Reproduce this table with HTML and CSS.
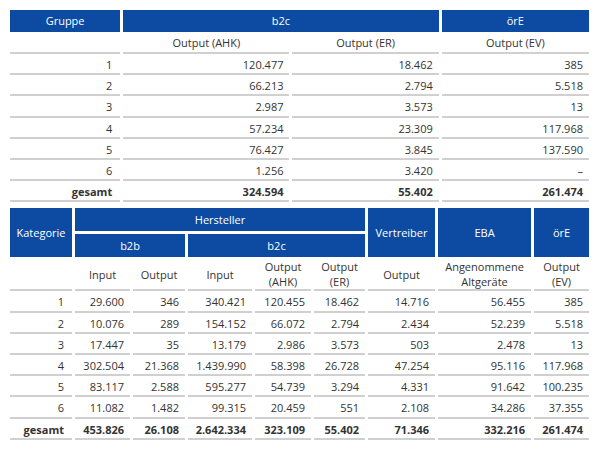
FILE: index.html
```html
<!DOCTYPE html>
<html lang="de">
<head>
<meta charset="utf-8">
<title>Tabellen</title>
<link rel="stylesheet" href="styles.css">
</head>
<body>
<div class="page">
<table class="grid t1">
  <colgroup>
    <col class="c-110"><col class="c-166"><col class="c-146"><col class="c-147">
  </colgroup>
  <thead>
    <tr class="hrow">
      <th class="head">Gruppe</th>
      <th class="head" colspan="2">b2c</th>
      <th class="head">örE</th>
    </tr>
    <tr class="srow">
      <th class="sub"></th>
      <th class="sub">Output (AHK)</th>
      <th class="sub">Output (ER)</th>
      <th class="sub">Output (EV)</th>
    </tr>
  </thead>
  <tbody>
    <tr><td>1</td><td>120.477</td><td>18.462</td><td>385</td></tr>
    <tr><td>2</td><td>66.213</td><td>2.794</td><td>5.518</td></tr>
    <tr><td>3</td><td>2.987</td><td>3.573</td><td>13</td></tr>
    <tr><td>4</td><td>57.234</td><td>23.309</td><td>117.968</td></tr>
    <tr><td>5</td><td>76.427</td><td>3.845</td><td>137.590</td></tr>
    <tr><td>6</td><td>1.256</td><td>3.420</td><td>–</td></tr>
    <tr class="total"><td>gesamt</td><td>324.594</td><td>55.402</td><td>261.474</td></tr>
  </tbody>
</table>
<table class="grid t2">
  <colgroup>
    <col class="c-62"><col class="c-55"><col class="c-52"><col class="c-64"><col class="c-56"><col class="c-51"><col class="c-67"><col class="c-93"><col class="c-55">
  </colgroup>
  <thead>
    <tr class="hrow2">
      <th class="head" rowspan="2">Kategorie</th>
      <th class="head" colspan="5">Hersteller</th>
      <th class="head" rowspan="2">Vertreiber</th>
      <th class="head" rowspan="2">EBA</th>
      <th class="head" rowspan="2">örE</th>
    </tr>
    <tr class="hrow2">
      <th class="head" colspan="2">b2b</th>
      <th class="head" colspan="3">b2c</th>
    </tr>
    <tr class="srow2">
      <th class="sub"></th>
      <th class="sub">Input</th>
      <th class="sub">Output</th>
      <th class="sub">Input</th>
      <th class="sub">Output<br>(AHK)</th>
      <th class="sub">Output<br>(ER)</th>
      <th class="sub">Output</th>
      <th class="sub">Angenommene<br>Altgeräte</th>
      <th class="sub">Output<br>(EV)</th>
    </tr>
  </thead>
  <tbody>
    <tr><td>1</td><td>29.600</td><td>346</td><td>340.421</td><td>120.455</td><td>18.462</td><td>14.716</td><td>56.455</td><td>385</td></tr>
    <tr><td>2</td><td>10.076</td><td>289</td><td>154.152</td><td>66.072</td><td>2.794</td><td>2.434</td><td>52.239</td><td>5.518</td></tr>
    <tr><td>3</td><td>17.447</td><td>35</td><td>13.179</td><td>2.986</td><td>3.573</td><td>503</td><td>2.478</td><td>13</td></tr>
    <tr><td>4</td><td>302.504</td><td>21.368</td><td>1.439.990</td><td>58.398</td><td>26.728</td><td>47.254</td><td>95.116</td><td>117.968</td></tr>
    <tr><td>5</td><td>83.117</td><td>2.588</td><td>595.277</td><td>54.739</td><td>3.294</td><td>4.331</td><td>91.642</td><td>100.235</td></tr>
    <tr><td>6</td><td>11.082</td><td>1.482</td><td>99.315</td><td>20.459</td><td>551</td><td>2.108</td><td>34.286</td><td>37.355</td></tr>
    <tr class="total"><td>gesamt</td><td>453.826</td><td>26.108</td><td>2.642.334</td><td>323.109</td><td>55.402</td><td>71.346</td><td>332.216</td><td>261.474</td></tr>
  </tbody>
</table>
</div>
</body>
</html>
```
FILE: styles.css
```css
html, body {
  margin: 0;
  padding: 0;
  background: #ffffff;
}
body {
  font-family: "Open Sans", "Noto Sans", sans-serif;
  font-size: 11px;
  color: #333333;
}
.page {
  padding: 7px 0 0 7px;
}
.grid {
  border-collapse: separate;
  border-spacing: 3px;
  table-layout: fixed;
  width: 585px;
}
.c-110 { width: 110px; }
.c-166 { width: 166px; }
.c-146 { width: 146px; }
.c-147 { width: 147px; }
.c-62 { width: 62px; }
.c-55 { width: 55px; }
.c-52 { width: 52px; }
.c-64 { width: 64px; }
.c-56 { width: 56px; }
.c-51 { width: 51px; }
.c-67 { width: 67px; }
.c-93 { width: 93px; }

th, td {
  padding: 0 6px;
  line-height: 16.2px;
}
.head {
  background: #0c4ba1;
  color: #ffffff;
  font-weight: normal;
  text-align: center;
  height: 22px;
  padding: 0 4px;
}
.hrow2 .head {
  height: 23px;
}
.sub {
  font-weight: normal;
  text-align: center;
  border-bottom: 2px solid #d0d0d0;
  height: 17px;
  vertical-align: middle;
  padding: 0 2px;
}
.srow2 .sub {
  height: 29px;
  line-height: 14.5px;
}
td {
  text-align: right;
  border-bottom: 2px solid #d0d0d0;
}
td:first-child {
  padding-right: 8px;
}
.total td {
  font-weight: bold;
}
```
